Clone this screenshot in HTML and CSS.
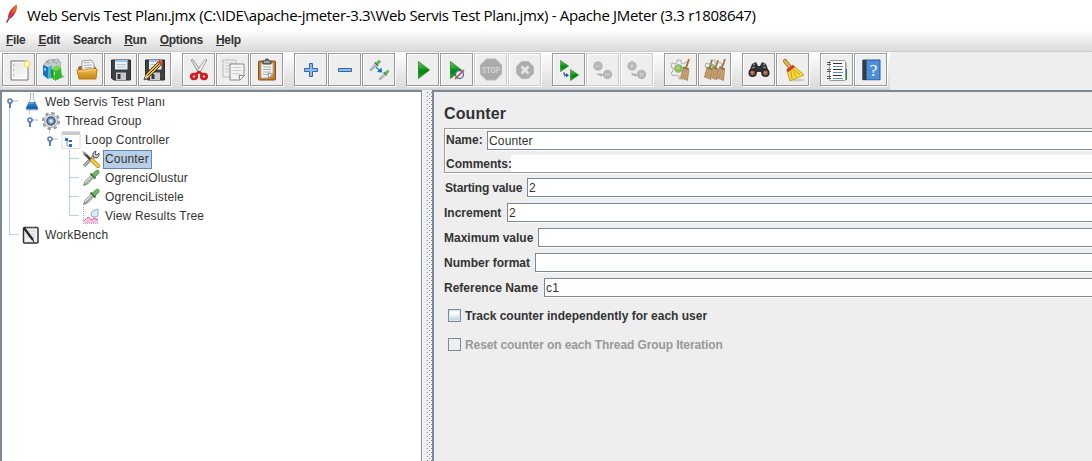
FILE: index.html
```html
<!DOCTYPE html>
<html lang="tr">
<head>
<meta charset="utf-8">
<title>Apache JMeter</title>
<link rel="stylesheet" href="styles.css">
</head>
<body>
<svg class="defs" width="0" height="0">
  <defs>
    <linearGradient id="green" x1="0" y1="0" x2="0" y2="1"><stop offset="0" stop-color="#7fc080"/><stop offset=".45" stop-color="#109a18"/><stop offset=".6" stop-color="#078010"/><stop offset="1" stop-color="#25bb20"/></linearGradient>
    <linearGradient id="folder" x1="0" y1="0" x2="0" y2="1"><stop offset="0" stop-color="#f2bc55"/><stop offset="1" stop-color="#c68211"/></linearGradient>
    <linearGradient id="paper" x1="0" y1="0" x2="1" y2="1"><stop offset="0" stop-color="#e0e0e0"/><stop offset="1" stop-color="#fff"/></linearGradient>
    <linearGradient id="feather" x1="0" y1="1" x2="1" y2="0"><stop offset="0" stop-color="#6b2878"/><stop offset=".45" stop-color="#c92035"/><stop offset="1" stop-color="#f08a20"/></linearGradient>
    <symbol id="play" viewBox="0 0 12 18" preserveAspectRatio="none"><path d="M.5.5 11.5 9 .5 17.5z" fill="url(#green)" stroke="#147a18" stroke-width=".7"/></symbol>
    <symbol id="floppy" viewBox="0 0 22 22"><path d="M1.500 1h19v20H3.500L1.500 19z" fill="#3e4144" stroke="#2b2d30"/><path d="M5 1h12.500v9.500H5z" fill="#e9f2f8"/><path d="M5 1h12.500v2H5z" fill="#9fc5e4"/><path d="M6.500 5.500h9.500M6.500 8h9.500" stroke="#b5c2cc"/><path d="M6 13.500h10V21H6z" fill="#c9c9c9"/><path d="M7.500 15h3v5h-3z" fill="#34373a"/></symbol>
    <symbol id="dropper" viewBox="0 0 18 18"><path d="M1.500 16.500 3 12.500 10 5.500 12.500 8 5.500 15z" fill="#e7ebe7" stroke="#7c847d"/><path d="M3 15.500 11 7.500" stroke="#626d64"/><path d="M8.500 4.500 13.500 9.500" stroke="#3c703c" stroke-width="1.800"/><path d="M10.500 5 14 1.500q2-1 3 .8.300 1.500-.7 2.500L13 8z" fill="#6cb564" stroke="#5b9955"/></symbol>
    <symbol id="gearbroom" viewBox="0 0 22 22"><path d="M8 2h4v3l2 1 3-2 2 3-2 2v3l3 1-1 4h-3l-2 2v2h-4v-3l-3-1-3 1-2-3 2-2v-3L2 9l1-4 3 1 2-1z" fill="#eee" stroke="#a5a5a5" stroke-width=".9"/><circle cx="9.500" cy="10.500" r="4" fill="#82c24b" stroke="#aaa" stroke-width=".8"/><circle cx="9" cy="9.800" r="1.800" fill="#a9dd78"/></symbol>
    <symbol id="brush" viewBox="0 0 10 22"><path d="M9 0 6 9" stroke="#a47442" stroke-width="1.800"/><path d="M3 8 9 10 8 22 0 19z" fill="#b28a5d"/><path d="M4.500 10 2 18.500M6 11 4 20M7.500 11.500 6 20.500" stroke="#dbbc91" stroke-width=".7"/><path d="m3 8 6 2" stroke="#806044"/></symbol>
    <symbol id="handle" viewBox="0 0 12 12"><path d="M6 4h6" stroke="#a3b8cc"/><path d="M4 6v5" stroke="#5e80bd" stroke-width="2"/><circle cx="4" cy="4" r="2" fill="#fff" stroke="#5e80bd" stroke-width="1.700"/></symbol>
  </defs>
</svg>
<div class="window">
  <header class="titlebar">
    <svg class="logo" width="14" height="20"><path d="M1 18.500 3 14C3 9 7 3 11.500.5c2 3-1 11-7 14.500L2 19z" fill="url(#feather)"/><path d="m3 15 6.500-10" stroke="#f3a9a0" stroke-width=".5"/></svg>
    <h1 class="title">Web Servis Test Planı.jmx (C:\IDE\apache-jmeter-3.3\Web Servis Test Planı.jmx) - Apache JMeter (3.3 r1808647)</h1>
  </header>
  <nav class="menu"><span><u>F</u>ile</span><span><u>E</u>dit</span><span>Search</span><span><u>R</u>un</span><span><u>O</u>ptions</span><span><u>H</u>elp</span></nav>
  <div class="toolbar-area">
  <div class="toolbar">
    <div class="group">
      <button class="tool"><svg viewBox="0 0 32 32"><path d="M8 7h17v19H8z" fill="url(#paper)" stroke="#777"/><path d="M9.500 8.500h14v16h-14z" fill="none" stroke="#fff"/><path d="M10 11h1M10 16h1M10 21h1" stroke="#777"/><circle cx="24" cy="10" r="3.500" fill="#f5e66c"/><circle cx="24" cy="10" r="1.700" fill="#fff"/></svg></button>
      <button class="tool"><svg viewBox="0 0 32 32"><path d="m19 26 9-3-4-3z" fill="#aaa"/><path d="m7 10 4-4 10-1 3 4-2 8H7z" fill="#c7cdcf" stroke="#929c9b" stroke-width=".7"/><path d="m9 9 3-2m3 2 3-3m2 3 2-2M9 7l4 3m2-4 5 4" stroke="#7f8788" stroke-width=".7"/><path d="m6 11 5 2v12l-5-4z" fill="#1478bd"/><path d="m11 13 4-2v13l-4 1z" fill="#47aee2"/><path d="m14 15 3 1v10l-3-3z" fill="#139b20"/><path d="m16 16 4 1v8l-4 1z" fill="#40c02c"/><path d="m18 16 6-2 1 9-7 4z" fill="#2eb926"/><path d="m14 15 6-4 5 3-6 3z" fill="#73d551"/><path d="M8 14v3M17.500 18v3" stroke="#fff"/></svg></button>
      <button class="tool"><svg viewBox="0 0 32 32"><path d="M7 14q0-2 3-2h12q3 0 3 3v6H8z" fill="#9c6b1d"/><path d="m11 7 9-1 3 4v10H11z" fill="#f6f6f6" stroke="#999"/><path d="m13 9 6-.5M13 11.500l8-.5M13 14l8-.5" stroke="#aaa"/><path d="M6 16h9l2-1h9l-1 10H8z" fill="url(#folder)" stroke="#b77c15"/><path d="M7 17h8l2-1h8" stroke="#ffdb8b" fill="none"/></svg></button>
      <button class="tool"><svg viewBox="0 0 32 32"><use href="#floppy" x="5" y="5" width="22" height="22"/></svg></button>
      <button class="tool"><svg viewBox="0 0 32 32"><use href="#floppy" x="5" y="5" width="22" height="22"/><path d="m7 20 12-12 3 3-12 12-5 3z" fill="#ecc22e" stroke="#4b3910"/><path d="m8.500 21.500 12-12" stroke="#2d271c"/><path d="m18.500 8.500 2-3 3.500 3-2 3z" fill="#d64a31"/><path d="m5 26 2-5 3 2z" fill="#e8c892"/><path d="m5 26 1-2 1 1z" fill="#222"/></svg></button>
    </div>
    <div class="group">
      <button class="tool"><svg viewBox="0 0 32 32"><path d="m8 6 2-.5L18 17l-2.500 2z" fill="#ddd" stroke="#888" stroke-width=".8"/><path d="m24 6-2-.5L14 17l2.500 2z" fill="#f5f5f5" stroke="#888" stroke-width=".8"/><ellipse cx="11" cy="22.500" rx="2.700" ry="2.300" fill="none" stroke="#d71921" stroke-width="2.800"/><ellipse cx="21" cy="22.500" rx="2.700" ry="2.300" fill="none" stroke="#d71921" stroke-width="2.800"/><path d="m13 20 3-2 3 2" fill="none" stroke="#d71921" stroke-width="2.500"/></svg></button>
      <button class="tool"><svg viewBox="0 0 32 32"><path d="M6 6h13v17H6z" fill="#eee" stroke="#bbb"/><path d="M8 9h9M8 12h9M8 15h9M8 18h5" stroke="#ccc"/><path d="M13 10h14v12l-4 4H13z" fill="#f3f3f3" stroke="#888"/><path d="M15.500 13.500h9M15.500 16.500h9M15.500 19.500h7" stroke="#ccc"/><path d="m27 22-5-1 1 5z" fill="#fff" stroke="#888"/></svg></button>
      <button class="tool"><svg viewBox="0 0 32 32"><rect x="7.500" y="7" width="17" height="19" rx="1" fill="#c17d22" stroke="#875012"/><path d="M10 9h12v12l-4 3h-8z" fill="#f5f5f2" stroke="#aaa"/><path d="M12 13h8M12 15.500h8M12 18h8M12 20.500h5" stroke="#aaa"/><path d="m22 20-5-.5.500 4.500z" fill="#fff" stroke="#888"/><path d="M12 7h2l1-2h2l1 2h2v3h-8z" fill="#777" stroke="#444"/><path d="M13 8h6" stroke="#ccc"/></svg></button>
    </div>
    <div class="group">
      <button class="tool"><svg viewBox="0 0 32 32"><path d="M14.500 9.500h3v5h5v3h-5v5h-3v-5h-5v-3h5z" fill="#8dbcea" stroke="#3465a4"/></svg></button>
      <button class="tool"><svg viewBox="0 0 32 32"><path d="M9.500 14.500h13v3h-13z" fill="#8dbcea" stroke="#3465a4"/></svg></button>
      <button class="tool"><svg viewBox="0 0 32 32"><use href="#dropper" x="6" y="5.500" width="12" height="12"/><use href="#dropper" x="15.500" y="15.500" width="11" height="11"/><path d="m13 13 4 4" stroke="#2988db" stroke-width="1.500"/><path d="m18.500 13.500.5 5-5-.5z" fill="#136bd0"/></svg></button>
    </div>
    <div class="group">
      <button class="tool"><svg viewBox="0 0 32 32"><use href="#play" x="11" y="7" width="12" height="18"/></svg></button>
      <button class="tool"><svg viewBox="0 0 32 32"><use href="#play" x="9" y="7" width="12" height="18"/><circle cx="18.500" cy="20.500" r="4" fill="#e8eef5" stroke="#3975b4" stroke-width="1.300"/><path d="m14 25 9-9" stroke="#e23329" stroke-width="1.400"/></svg></button>
      <button class="tool off"><svg viewBox="0 0 32 32"><path d="M11.500 5h9l6 6v9l-6 6h-9l-6-6v-9z" fill="#aaa" stroke="#b7b7b7"/><text x="16" y="19" textLength="18" lengthAdjust="spacingAndGlyphs" class="stop">STOP</text></svg></button>
      <button class="tool off"><svg viewBox="0 0 32 32"><path d="M12.500 7.500h7l5 5v7l-5 5h-7l-5-5v-7z" fill="#adadad" stroke="#bababa"/><path d="m12.500 12.500 7 7m0-7-7 7" stroke="#e4e4e4" stroke-width="2.700"/></svg></button>
    </div>
    <div class="group">
      <button class="tool"><svg viewBox="0 0 32 32"><use href="#play" x="7" y="6" width="9" height="12"/><use href="#play" x="17" y="15" width="9" height="12"/><path d="m10 19 2-1v2h3v2h-3v2z" fill="#4a74aa"/><path d="m13 19 3 2.500-3 2z" fill="#335f98"/></svg></button>
      <button class="tool off"><svg viewBox="0 0 32 32"><circle cx="11" cy="12" r="4.700" fill="#b6b6b6"/><circle cx="20.500" cy="20.500" r="4.700" fill="#b6b6b6"/><path d="M8.500 12h5M18 20.500h5" stroke="#ccc" stroke-width="1.500"/><path d="m10 19 4 1v-1l2 2-2 2v-1l-3-1z" fill="#aaa"/></svg></button>
      <button class="tool off"><svg viewBox="0 0 32 32"><circle cx="11" cy="12" r="4.700" fill="#b6b6b6"/><circle cx="20.500" cy="20.500" r="4.700" fill="#b6b6b6"/><path d="m9.500 10.500 3 3m0-3-3 3m9.500 5.500 3 3m0-3-3 3" stroke="#e2e2e2"/><path d="m10 19 4 1v-1l2 2-2 2v-1l-3-1z" fill="#aaa"/></svg></button>
    </div>
    <div class="group">
      <button class="tool"><svg viewBox="0 0 32 32"><use href="#gearbroom" x="4" y="4" width="22" height="22"/><use href="#brush" x="15" y="5" width="10" height="22"/></svg></button>
      <button class="tool"><svg viewBox="0 0 32 32"><use href="#gearbroom" x="4" y="4" width="22" height="22"/><use href="#brush" x="5" y="6" width="9" height="20"/><use href="#brush" x="11" y="6" width="9" height="20"/><use href="#brush" x="17" y="5" width="10" height="22"/></svg></button>
    </div>
    <div class="group">
      <button class="tool"><svg viewBox="0 0 32 32"><path d="m9 10 4-2 2 4h2l2-4 4 2 3 8-7 4-1-4h-4l-1 4-7-4z" fill="#303335"/><path d="m10 11 2-1m8 0 2 1M9 14l3-1m8 0 3 1" stroke="#9fa2a3"/><circle cx="9.500" cy="19" r="4" fill="#24282a"/><circle cx="22.500" cy="19" r="4" fill="#24282a"/><circle cx="9.500" cy="19" r="2.400" fill="#b45e3c"/><circle cx="22.500" cy="19" r="2.400" fill="#b45e3c"/><path d="m8 18 2 .5m11-.5 2 .5" stroke="#dda27b"/></svg></button>
      <button class="tool"><svg viewBox="0 0 32 32"><ellipse cx="20" cy="26" rx="8" ry="1.500" fill="#ccc"/><path d="m8 7 5 6" stroke="#a36c16" stroke-width="4.200" stroke-linecap="round"/><path d="m8 7 5 6" stroke="#e7b552" stroke-width="2.500" stroke-linecap="round"/><path d="m17 12 10 9-14 6-3-10z" fill="#f3d83e" stroke="#b99716" stroke-width=".8"/><path d="m14 17 1 8m1-9 3 7m-2-8 6 6" stroke="#c6a51b"/><path d="m10 17 7-5" stroke="#cd3827" stroke-width="3"/></svg></button>
    </div>
    <div class="group">
      <button class="tool"><svg viewBox="0 0 32 32"><path d="M24 9h2v6h-2z" fill="#bbb"/><path d="M24 15h2v5h-2z" fill="#1969dc"/><path d="M24 20h2v6h-2z" fill="#14a034"/><rect x="8.500" y="6.500" width="16" height="20" rx="1" fill="#fdfdfd" stroke="#999"/><path d="M12 9.500h9M12 15.500h9M12 21.500h9" stroke="#333"/><path d="M12 12.500h10M12 18.500h10M12 24.500h10" stroke="#558fc5"/><path d="M6 8.500h4M6 10.500h4M6 15.500h4M6 17.500h4M6 22.500h4M6 24.500h4" stroke="#555"/></svg></button>
      <button class="tool"><svg viewBox="0 0 32 32"><path d="M8 6h17v20H8z" fill="#4d8fdb" stroke="#245998"/><path d="M7.500 6h4v20h-4z" fill="#333b43"/><path d="M8 26.500h17" stroke="#ccc"/><text x="18.500" y="21.500" class="help-mark">?</text></svg></button>
    </div>
  </div>
  </div>
  <main class="split">
    <section class="tree">
      <svg class="branches" width="90" height="150"><path d="M7.500 14v128.500h9M27.500 14v8M47.500 33v8M67.500 58v65.500H77M67.500 66.500H77M67.500 85.500H77M67.500 104.500H77" fill="none" stroke="#b8cfe5"/></svg>
      <div class="row l0"><svg class="knob"><use href="#handle" width="12" height="12"/></svg><svg class="ico" viewBox="0 0 20 18"><path d="M9 0h4M9.500 0v6L5 15.500q0 1.500 1.500 1.500h9.500q1.500 0 1-1.500L12.500 6V0" fill="#f5f9fc" stroke="#adbcc7"/><path d="m8 9-3 6q0 1.500 1.500 1.500h9.500q1.500 0 1-1.500L14 9z" fill="#2a74cb"/><path d="M8 10h5" stroke="#8fc2ef"/><path d="M6 14.500h10" stroke="#1758a9" stroke-width="2"/></svg><span>Web Servis Test Planı</span></div>
      <div class="row l1"><svg class="knob"><use href="#handle" width="12" height="12"/></svg><svg class="ico" viewBox="0 0 20 18"><circle cx="10" cy="9" r="8" fill="none" stroke="#969696" stroke-width="2" stroke-dasharray="3.500 2.780"/><circle cx="10" cy="9" r="6.500" fill="#e4e4e4" stroke="#a4a4a4"/><circle cx="10" cy="9" r="4" fill="#7597bf" stroke="#3d5c89" stroke-width="1.500"/><circle cx="10" cy="9" r="1.700" fill="#dceafa"/></svg><span>Thread Group</span></div>
      <div class="row l2"><svg class="knob"><use href="#handle" width="12" height="12"/></svg><svg class="ico" viewBox="0 0 20 18"><path d="M1 .5h18v17H1z" fill="#fff" stroke="#ddd"/><path d="M1 1h18v3H1z" fill="#c9c9c9"/><path d="M6 8v7h4M6 10h4" fill="none" stroke="#80a0c0"/><path d="M4 7h3v3H4zM8 9h3v2H8zM8 13h3v3H8z" fill="#346eae"/></svg><span>Loop Controller</span></div>
      <div class="row l3"><svg class="ico" viewBox="0 0 20 18"><path d="m3 16 11-11" stroke="#4e5354" stroke-width="2.800"/><path d="m3 16 11-11" stroke="#d4d8d8" stroke-width="1.200"/><path d="M12 6q-1-4 3-5l-1 3 2 1 2-2q1 5-4 5z" fill="#c5c9ca" stroke="#555"/><path d="m3 3 7 7" stroke="#42484b" stroke-width="2.500"/><path d="m1.500 1.500 4 3" stroke="#a5abae" stroke-width="1.500"/><path d="m11 10 6 6" stroke="#b98412" stroke-width="4" stroke-linecap="round"/><path d="m11 10 6 6" stroke="#f4cb42" stroke-width="2.500" stroke-linecap="round"/></svg><span class="selected">Counter</span></div>
      <div class="row l3"><svg class="ico" viewBox="0 0 20 18"><use href="#dropper" x="1" width="18" height="18"/></svg><span>OgrenciOlustur</span></div>
      <div class="row l3"><svg class="ico" viewBox="0 0 20 18"><use href="#dropper" x="1" width="18" height="18"/></svg><span>OgrenciListele</span></div>
      <div class="row l3"><svg class="ico" viewBox="0 0 20 18"><path d="M2.500 0v16.500H18" fill="none" stroke="#aaa" stroke-dasharray="1 1"/><path d="m3 15 4-4 4 2 2-3 4 2v4H3z" fill="#f8bbda"/><path d="m3 14 4-4 4 3 2-2 4 2" fill="none" stroke="#d966a2"/><path d="M10 8q0-4 4-5l3-1v7l-4 1q-3 0-3-2z" fill="#dcedff" stroke="#8eabd3"/></svg><span>View Results Tree</span></div>
      <div class="row l0 leaf"><svg class="ico" viewBox="0 0 20 18"><rect x="2.500" y="1.500" width="14.500" height="15.500" rx="1" fill="#f1f1f1" stroke="#333" stroke-width="1.500"/><path d="M5 2h10" stroke="#aaa" stroke-dasharray="1 1"/><path d="M5 5h9M5 8h9M5 11h9" stroke="#ccc"/><path d="m3 2 9 12" stroke="#242424" stroke-width="2.200"/><path d="m12 14 1 2" stroke="#222"/></svg><span>WorkBench</span></div>
    </section>
    <div class="divider"><svg width="5" height="369"><defs><pattern id="dots" width="4" height="4" patternUnits="userSpaceOnUse"><path d="M0 0h1v1H0zM2 2h1v1H2z" fill="#7a8a99"/><path d="M1 1h1v1H1zM3 3h1v1H3z" fill="#fff"/></pattern></defs><rect width="5" height="369" fill="url(#dots)"/></svg></div>
    <section class="panel">
      <h2>Counter</h2>
      <div class="namebox">
        <div class="name-row"><label class="w-name">Name:</label><div class="input">Counter</div></div>
        <div class="comment-row"><label>Comments:</label><div class="comment"></div></div>
      </div>
      <div class="field"><label class="w-start">Starting value</label><div class="input">2</div></div>
      <div class="field"><label class="w-inc">Increment</label><div class="input">2</div></div>
      <div class="field"><label class="w-max">Maximum value</label><div class="input"></div></div>
      <div class="field"><label class="w-num">Number format</label><div class="input"></div></div>
      <div class="field"><label class="w-ref">Reference Name</label><div class="input">c1</div></div>
      <div class="checks">
        <div class="check"><i></i><span class="track">Track counter independently for each user</span></div>
        <div class="check disabled"><i></i><span>Reset counter on each Thread Group Iteration</span></div>
      </div>
    </section>
  </main>
</div>
</body>
</html>
```
FILE: styles.css
```css
* { box-sizing: border-box; }
body { margin: 0; background: #eee; color: #333; font: 12px "Liberation Sans", Arial, sans-serif; overflow: hidden; }
.defs { position: absolute; }
.window { width: 1092px; height: 461px; display: flex; flex-direction: column; }
.titlebar { height: 30px; background: #fff; display: flex; align-items: flex-start; padding: 4px 0 0 5px; }
.logo { flex: none; margin-right: 8px; }
.title { margin: 0; color: #000; font: 15px/22px "Open Sans", "Noto Sans", sans-serif; letter-spacing: -.34px; white-space: nowrap; }
.menu { height: 22px; padding: 0 6px; display: flex; gap: 13px; background: linear-gradient(#fff, #dadada); border-bottom: 1px solid #ccc; font-weight: bold; line-height: 20px; letter-spacing: -.3px; }
.menu u { text-decoration: none; display: inline-block; height: 16px; border-bottom: 1px solid #333; }
.toolbar-area { height: 38px; background: #eee; }
.toolbar { width: 890px; height: 38px; padding: 1px 2px 0; display: flex; gap: 10px; background: linear-gradient(#fff, #dadada); border-bottom: 1px solid #ccc; }
.group { display: flex; }
.tool { width: 33px; height: 33px; margin-right: 1px; padding: 0; display: block; background: #eee; border: 1px solid #999; box-shadow: inset 1px 1px #fff, 1px 1px #fff; }
.tool svg { width: 32px; height: 32px; display: block; }
.tool.off { border-color: #ccc; }
.stop { font: bold 9px "Liberation Sans", sans-serif; text-anchor: middle; fill: #d6d6d6; }
.help-mark { font: 17px "Liberation Serif", serif; text-anchor: middle; fill: #fff; }
.split { flex: 1; min-height: 0; display: grid; grid-template-columns: 422px 10px 1fr; }
.tree { position: relative; background: #fff; border: solid #7a8a99; border-width: 2px 1px 0 2px; padding-top: 1px; }
.branches { position: absolute; left: 0; top: 0; }
.row { position: relative; height: 19px; display: flex; align-items: center; letter-spacing: .16px; }
.row span { padding: 0 2px; line-height: 17px; white-space: nowrap; }
.row .ico { width: 20px; height: 18px; margin: -1px 2px 0 -1px; flex: none; }
.knob { width: 12px; height: 12px; margin-right: 4px; overflow: visible; }
.l0 { padding-left: 4px; }
.l1 { padding-left: 24px; }
.l2 { padding-left: 44px; }
.l3 { padding-left: 80px; }
.leaf { padding-left: 20px; }
.row .selected { background: #b8cfe5; box-shadow: inset 0 0 0 1px #6382bf; line-height: 19px; padding-right: 3px; }
.divider { background: #eee; padding: 2px 0 0 5px; box-shadow: inset 1px 0 #fff; }
.divider svg { display: block; }
.panel { min-width: 0; border: solid #7a8a99; border-width: 2px 0 0 2px; padding: 12px 0 0 10px; font-weight: bold; }
h2 { margin: 0; font-size: 16px; line-height: 20px; height: 24px; letter-spacing: .1px; }
.namebox { height: 45px; border: solid #999; border-width: 1px 0 1px 1px; box-shadow: inset 1px 1px #fff, 0 1px #fff; padding: 1px 0 0 1px; margin-bottom: 4px; }
.name-row, .comment-row, .field { display: flex; align-items: center; white-space: nowrap; }
.comment-row { height: 17px; margin-top: 5px; }
.comment { flex: 1; height: 17px; background: #fff; }
.name-row { height: 20px; }
.input { flex: 1; height: 19px; border: 1px solid #7a8a99; border-right: 0; background: #fff; box-shadow: 0 1px #fff; padding-left: 1px; line-height: 18px; font-weight: normal; letter-spacing: .15px; }
.field { height: 20px; margin-bottom: 5px; }
label { flex: none; }
.field label { padding-top: 2px; }
.comment-row label { width: 65px; }
.w-name { width: 41px; }
.field .w-start { width: 83px; padding-left: 1px; letter-spacing: -.15px; }
.w-inc { width: 63px; }
.w-max { width: 94px; }
.w-num { width: 91px; }
.w-ref { width: 100px; }
.checks { margin-top: -1px; }
.check { height: 29px; display: flex; align-items: center; gap: 4px; padding-left: 4px; white-space: nowrap; }
.check i { width: 13px; height: 13px; border: 1px solid #7a8a99; background: linear-gradient(#eef4fa, #fff 30%, #b8cfe5); box-shadow: inset 0 0 0 1px #dce6f0; }
.disabled { color: #999; letter-spacing: -.1px; }
.disabled i { background: none; box-shadow: none; }
```
